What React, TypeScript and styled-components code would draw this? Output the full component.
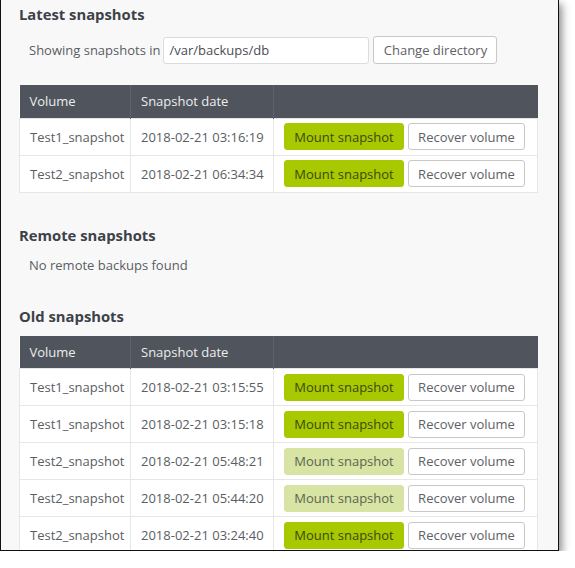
import React from "react";
import styled, { createGlobalStyle } from "styled-components";

const Global = createGlobalStyle`
  html, body { margin: 0; padding: 0; background: #ffffff; }
  body { font-family: "Open Sans", "Noto Sans", Arial, sans-serif; }
`;

const Window = styled.div`
  width: 559px;
  height: 551px;
  border-left: 1.5px solid #111;
  border-right: 1.5px solid #111;
  border-bottom: 1.5px solid #111;
  background: #f8f8f8;
  box-shadow: 3px 4px 8px rgba(0, 0, 0, 0.45);
  overflow: hidden;
  padding: 4px 0 0 18px;
  box-sizing: border-box;
`;

const Title = styled.h2<{ $top: number }>`
  margin: ${(p) => p.$top}px 0 0 0;
  font-size: 14.8px;
  line-height: 20px;
  font-weight: 700;
  color: #3d4149;
`;

const Note = styled.p`
  margin: 10px 0 0 10px;
  font-size: 13px;
  line-height: 20px;
  color: #5a5d63;
`;

const DirRow = styled.div`
  display: flex;
  align-items: center;
  margin: 12px 0 0 10px;
  height: 28px;
  gap: 4px;
`;

const DirLabel = styled.span`
  font-size: 13px;
  color: #5a5d63;
  margin-right: -1px;
`;

const DirInput = styled.div`
  width: 199px;
  height: 25px;
  border: 1px solid #dcdcdc;
  border-radius: 3px;
  background: #fff;
  display: flex;
  align-items: center;
  padding-left: 5px;
  font-size: 13px;
  color: #4a4d52;
`;

const Button = styled.button<{ $variant?: "mount" | "mountDisabled" | "plain" }>`
  height: 27px;
  box-sizing: border-box;
  border-radius: 3px;
  font-family: inherit;
  font-size: 13px;
  padding: 0;
  cursor: pointer;
  display: inline-flex;
  align-items: center;
  justify-content: center;
  border: 1px solid
    ${(p) =>
      p.$variant === "mount"
        ? "#a8c800"
        : p.$variant === "mountDisabled"
        ? "#d7e4a4"
        : "#c8c8c8"};
  background: ${(p) =>
    p.$variant === "mount" ? "#a8c800" : p.$variant === "mountDisabled" ? "#d7e4a4" : "#ffffff"};
  color: ${(p) =>
    p.$variant === "mount" ? "#3a4a10" : p.$variant === "mountDisabled" ? "#5d6450" : "#5e6166"};
`;

const ChangeButton = styled(Button)`
  width: 124px;
  height: 28px;
`;

const Table = styled.table<{ $top: number }>`
  margin-top: ${(p) => p.$top}px;
  width: 518px;
  border-collapse: collapse;
  table-layout: fixed;
  background: #fff;
`;

const Th = styled.th<{ $w: number }>`
  width: ${(p) => p.$w}px;
  height: 33px;
  padding: 0 0 0 10px;
  text-align: left;
  font-weight: 400;
  font-size: 13px;
  color: #eceded;
  background: #50555d;
  border-right: 1px solid #5e636b;
  box-sizing: border-box;
  &:last-child { border-right: none; }
`;

const Td = styled.td`
  height: 37px;
  padding: 0 0 0 10px;
  font-size: 13px;
  color: #5a5d63;
  border: 1px solid #e6e6e6;
  box-sizing: border-box;
  white-space: nowrap;
`;

const ActionCell = styled.td`
  height: 37px;
  padding: 0 10px 0 10px;
  border: 1px solid #e6e6e6;
  box-sizing: border-box;
`;

const Actions = styled.div`
  display: flex;
  gap: 4px;
`;

const MountBtn = styled(Button)`
  width: 120px;
`;

const RecoverBtn = styled(Button)`
  width: 117px;
`;

type Row = { vol: string; date: string; disabled?: boolean };

const latest: Row[] = [
  { vol: "Test1_snapshot", date: "2018-02-21 03:16:19" },
  { vol: "Test2_snapshot", date: "2018-02-21 06:34:34" },
];

const old: Row[] = [
  { vol: "Test1_snapshot", date: "2018-02-21 03:15:55" },
  { vol: "Test1_snapshot", date: "2018-02-21 03:15:18" },
  { vol: "Test2_snapshot", date: "2018-02-21 05:48:21", disabled: true },
  { vol: "Test2_snapshot", date: "2018-02-21 05:44:20", disabled: true },
  { vol: "Test2_snapshot", date: "2018-02-21 03:24:40" },
];

function SnapTable({ rows, top }: { rows: Row[]; top: number }) {
  return (
    <Table $top={top}>
      <thead>
        <tr>
          <Th $w={111}>Volume</Th>
          <Th $w={143}>Snapshot date</Th>
          <Th $w={264}></Th>
        </tr>
      </thead>
      <tbody>
        {rows.map((r, i) => (
          <tr key={i}>
            <Td>{r.vol}</Td>
            <Td>{r.date}</Td>
            <ActionCell>
              <Actions>
                <MountBtn $variant={r.disabled ? "mountDisabled" : "mount"}>Mount snapshot</MountBtn>
                <RecoverBtn $variant="plain">Recover volume</RecoverBtn>
              </Actions>
            </ActionCell>
          </tr>
        ))}
      </tbody>
    </Table>
  );
}

export default function App() {
  return (
    <>
      <Global />
      <Window>
        <Title $top={0}>Latest snapshots</Title>
        <DirRow>
          <DirLabel>Showing snapshots in</DirLabel>
          <DirInput>/var/backups/db</DirInput>
          <ChangeButton $variant="plain">Change directory</ChangeButton>
        </DirRow>
        <SnapTable rows={latest} top={21} />
        <Title $top={32}>Remote snapshots</Title>
        <Note>No remote backups found</Note>
        <Title $top={31}>Old snapshots</Title>
        <SnapTable rows={old} top={10} />
      </Window>
    </>
  );
}
